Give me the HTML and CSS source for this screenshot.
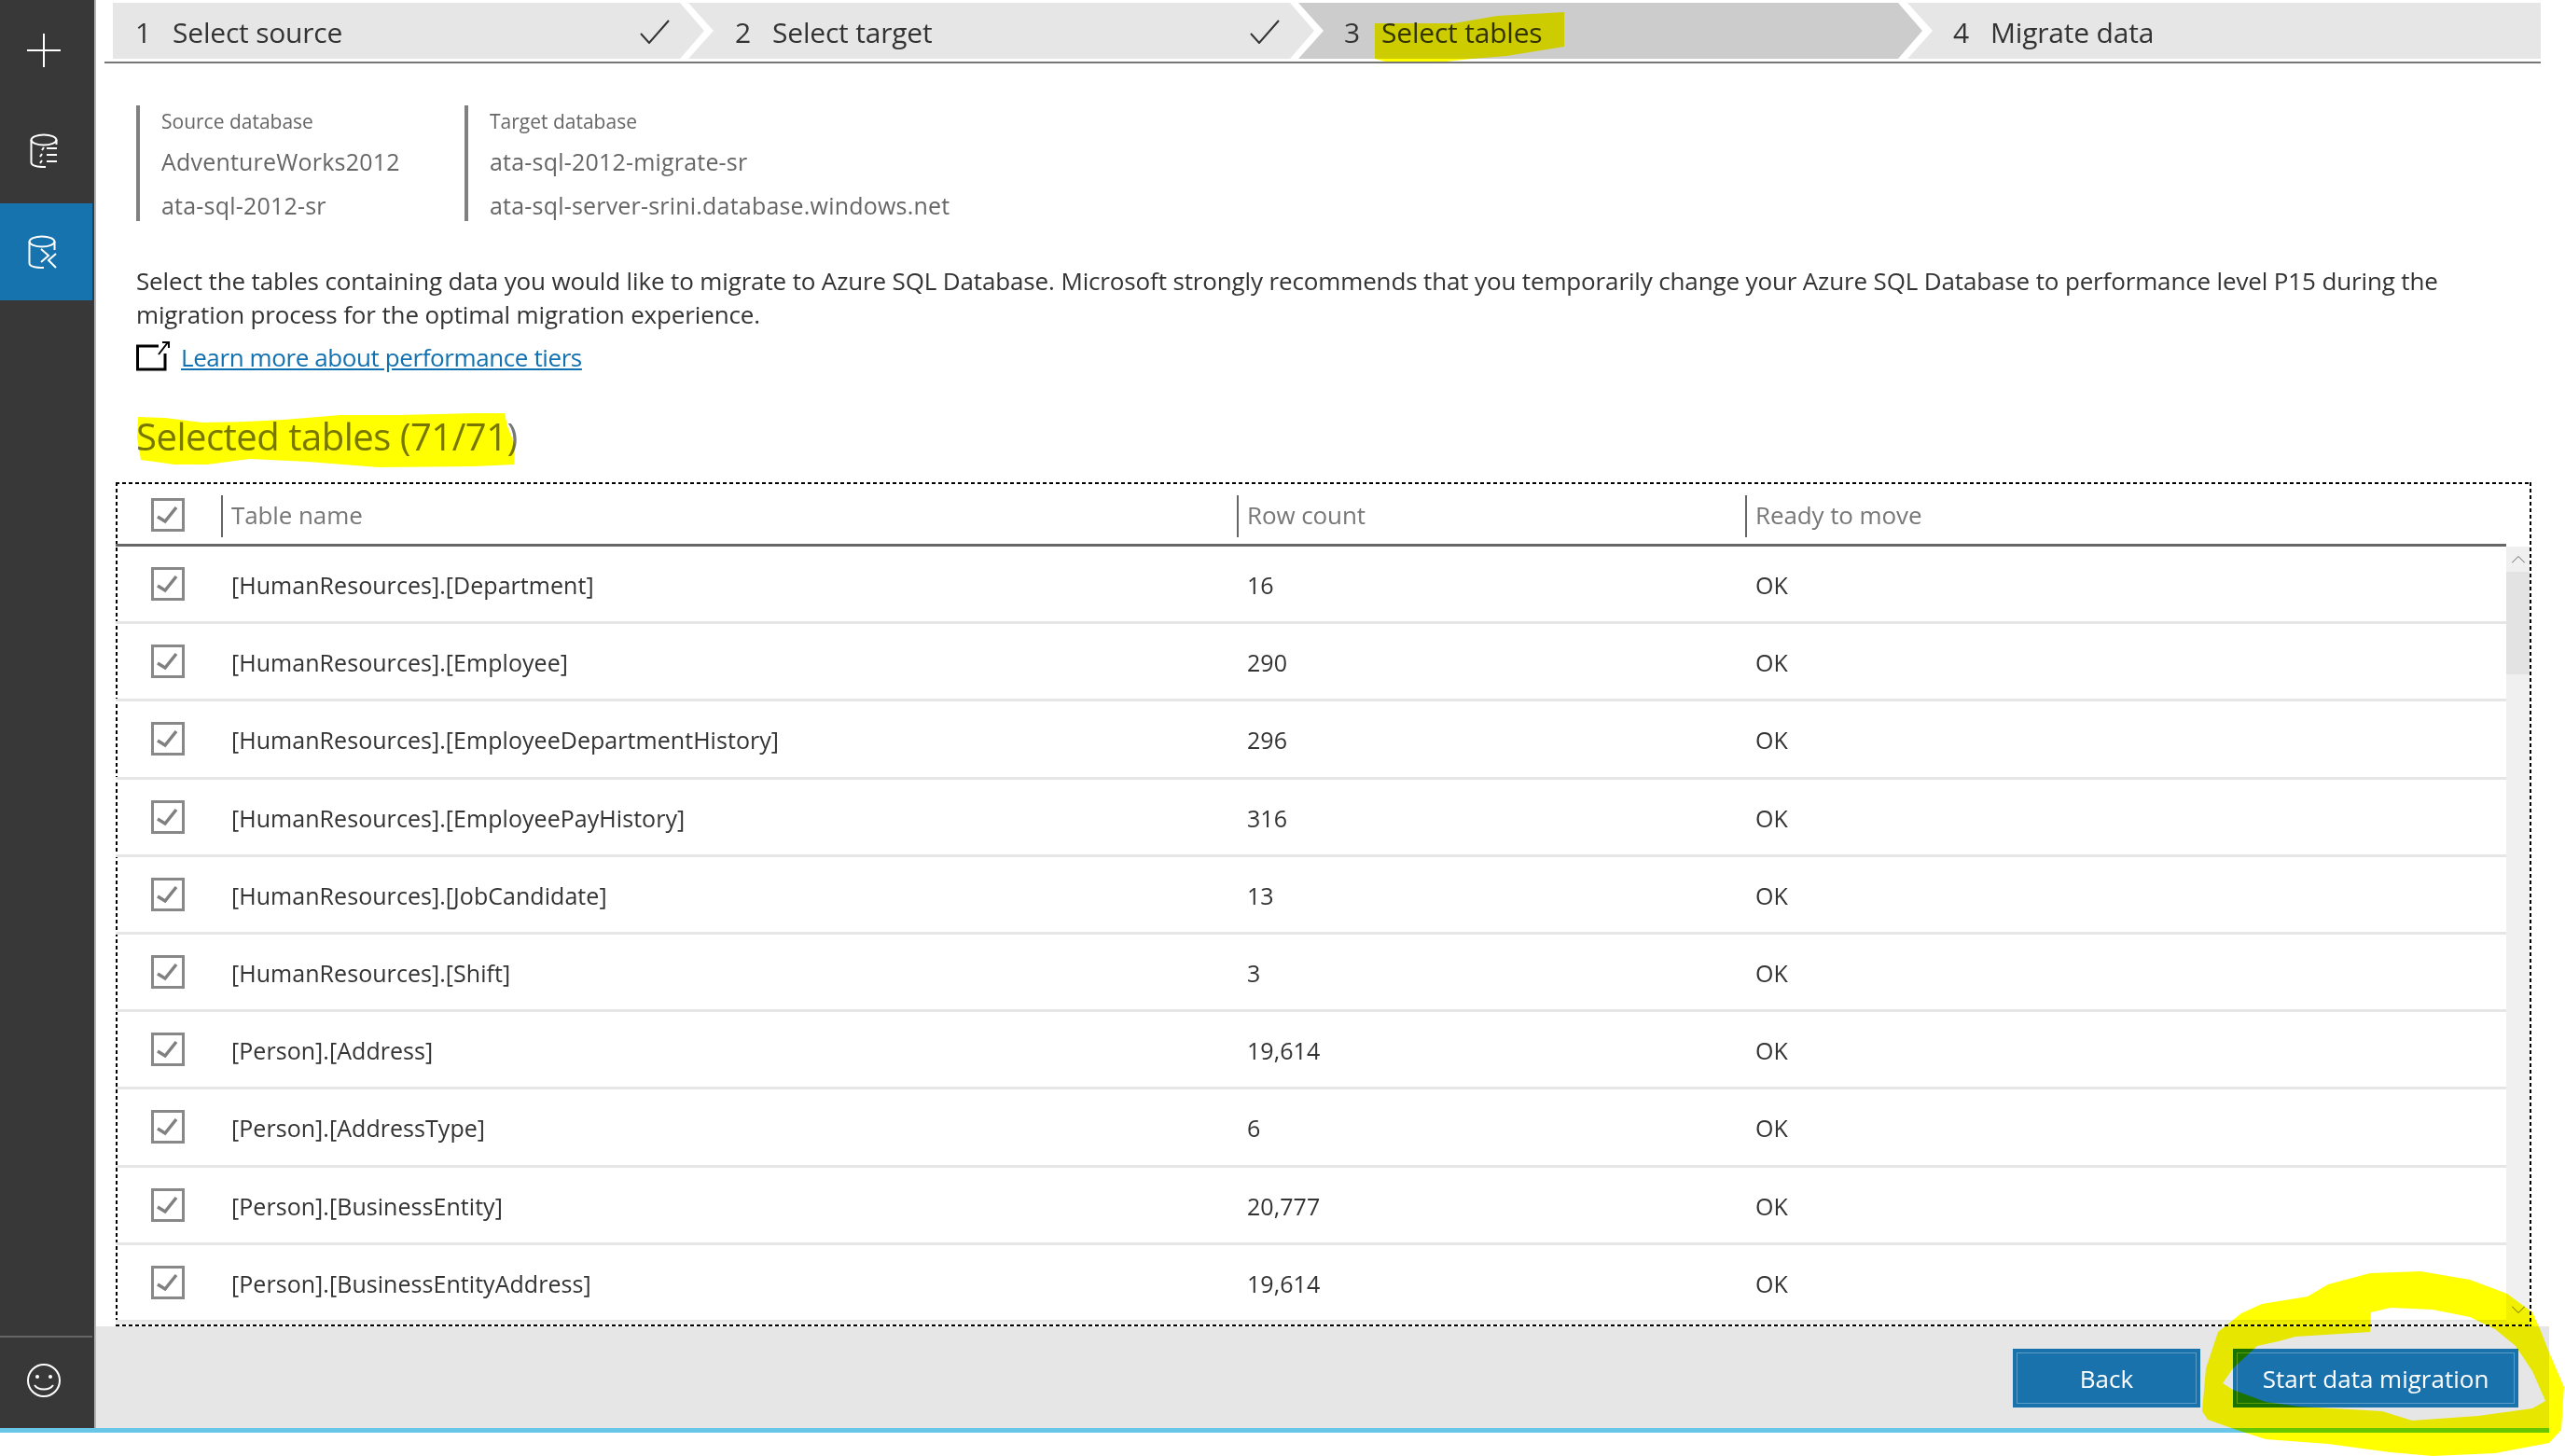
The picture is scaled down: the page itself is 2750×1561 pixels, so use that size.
FILE: index.html
```html
<!DOCTYPE html>
<html lang="en">
<head>
    <meta charset="UTF-8">
    <title>Select tables - Data Migration Assistant</title>
    <link rel="stylesheet" href="styles.css">
</head>
<body>
    <svg class="defs" width="0" height="0">
        <symbol id="check" viewBox="0 0 36 36">
            <rect x="1.5" y="1.5" width="33" height="33" fill="#fff" stroke="#888" stroke-width="3"/>
            <path d="M7 20 L15 25 L27 10" fill="none" stroke="#808080" stroke-width="3.5"/>
        </symbol>
    </svg>

    <div class="app">
        <nav class="sidebar">
            <div class="nav-item">
                <svg width="36" height="36" viewBox="0 0 36 36" fill="none" stroke="#fff" stroke-width="2"><path d="M0 18H36M18 0V36"/></svg>
            </div>
            <div class="nav-item">
                <svg width="30" height="38" viewBox="0 0 30 38" fill="none" stroke="#fff" stroke-width="2">
                    <ellipse cx="15" cy="7" rx="13.5" ry="5.5"/>
                    <path d="M1.5 7V31C1.5 34 6 36 17 36M28.5 7V12"/>
                    <path d="M15 15l-2 3M13 22l-2 3M13 29l-2 3M18 16H29M18 23H29M18 30H29"/>
                </svg>
            </div>
            <div class="nav-item active">
                <svg width="32" height="36" viewBox="0 0 32 36" fill="none" stroke="#fff" stroke-width="2">
                    <ellipse cx="15" cy="7" rx="13.5" ry="5.5"/>
                    <path d="M1.5 7V30C1.5 33 6 35 17 35M28.5 7V16"/>
                    <path d="M14 15L22 22L14 29M30 20L22 27L30 35"/>
                </svg>
            </div>
            <div class="nav-spacer"></div>
            <div class="nav-item smile">
                <svg width="36" height="36" viewBox="0 0 36 36" fill="none" stroke="#fff" stroke-width="2">
                    <circle cx="18" cy="18" r="17"/>
                    <circle cx="11" cy="14" r="2" fill="#fff" stroke="none"/>
                    <circle cx="25" cy="14" r="2" fill="#fff" stroke="none"/>
                    <path d="M8 23C12 29 24 29 28 23"/>
                </svg>
            </div>
        </nav>

        <main class="main">
            <div class="stepper">
                <div class="step step-first">
                    <span class="step-num">1</span><span>Select source</span>
                    <svg class="step-check" width="32" height="26" viewBox="0 0 32 26" fill="none" stroke="#333" stroke-width="2"><path d="M1 15L10 25L31 1"/></svg>
                </div>
                <div class="step step-second">
                    <span class="step-num">2</span><span>Select target</span>
                    <svg class="step-check" width="32" height="26" viewBox="0 0 32 26" fill="none" stroke="#333" stroke-width="2"><path d="M1 15L10 25L31 1"/></svg>
                </div>
                <div class="step step-third current">
                    <span class="step-num">3</span><span>Select tables</span>
                </div>
                <div class="step step-fourth">
                    <span class="step-num">4</span><span>Migrate data</span>
                </div>
            </div>

            <div class="db-info">
                <div class="db-block db-source">
                    <div class="db-label">Source database</div>
                    <div class="db-value">AdventureWorks2012</div>
                    <div class="db-value">ata-sql-2012-sr</div>
                </div>
                <div class="db-block">
                    <div class="db-label">Target database</div>
                    <div class="db-value">ata-sql-2012-migrate-sr</div>
                    <div class="db-value">ata-sql-server-srini.database.windows.net</div>
                </div>
            </div>

            <p class="intro">Select the tables containing data you would like to migrate to Azure SQL Database. Microsoft strongly recommends that you temporarily change your Azure SQL Database to performance level P15 during the migration process for the optimal migration experience.</p>

            <div class="learn-more">
                <svg width="37" height="33" viewBox="0 0 37 33" fill="none" stroke="#000" stroke-width="3">
                    <path d="M24 6H1.5V31H31V14"/>
                    <path d="M24 15L34 2M28 2H35V8" stroke-width="2"/>
                </svg>
                <a href="#">Learn more about performance tiers</a>
            </div>

            <h2 class="tables-title">Selected tables (71/71)</h2>

            <div class="table-box">
                <div class="table-head">
                    <div class="cell-check"><svg width="36" height="36"><use href="#check"/></svg></div>
                    <div class="head-cell">Table name</div>
                    <div class="head-cell">Row count</div>
                    <div class="head-cell">Ready to move</div>
                </div>
                <div class="table-body">
                    <div class="rows">
                        <div class="row"><div class="cell-check"><svg width="36" height="36"><use href="#check"/></svg></div><div class="cell">[HumanResources].[Department]</div><div class="cell">16</div><div class="cell">OK</div></div>
                        <div class="row"><div class="cell-check"><svg width="36" height="36"><use href="#check"/></svg></div><div class="cell">[HumanResources].[Employee]</div><div class="cell">290</div><div class="cell">OK</div></div>
                        <div class="row"><div class="cell-check"><svg width="36" height="36"><use href="#check"/></svg></div><div class="cell">[HumanResources].[EmployeeDepartmentHistory]</div><div class="cell">296</div><div class="cell">OK</div></div>
                        <div class="row"><div class="cell-check"><svg width="36" height="36"><use href="#check"/></svg></div><div class="cell">[HumanResources].[EmployeePayHistory]</div><div class="cell">316</div><div class="cell">OK</div></div>
                        <div class="row"><div class="cell-check"><svg width="36" height="36"><use href="#check"/></svg></div><div class="cell">[HumanResources].[JobCandidate]</div><div class="cell">13</div><div class="cell">OK</div></div>
                        <div class="row"><div class="cell-check"><svg width="36" height="36"><use href="#check"/></svg></div><div class="cell">[HumanResources].[Shift]</div><div class="cell">3</div><div class="cell">OK</div></div>
                        <div class="row"><div class="cell-check"><svg width="36" height="36"><use href="#check"/></svg></div><div class="cell">[Person].[Address]</div><div class="cell">19,614</div><div class="cell">OK</div></div>
                        <div class="row"><div class="cell-check"><svg width="36" height="36"><use href="#check"/></svg></div><div class="cell">[Person].[AddressType]</div><div class="cell">6</div><div class="cell">OK</div></div>
                        <div class="row"><div class="cell-check"><svg width="36" height="36"><use href="#check"/></svg></div><div class="cell">[Person].[BusinessEntity]</div><div class="cell">20,777</div><div class="cell">OK</div></div>
                        <div class="row"><div class="cell-check"><svg width="36" height="36"><use href="#check"/></svg></div><div class="cell">[Person].[BusinessEntityAddress]</div><div class="cell">19,614</div><div class="cell">OK</div></div>
                    </div>
                    <div class="scrollbar">
                        <div class="scroll-btn"><svg width="14" height="8" viewBox="0 0 14 8" fill="none" stroke="#666" stroke-width="1"><path d="M0 7.5L7 .5L14 7.5"/></svg></div>
                        <div class="scroll-thumb"></div>
                        <div class="scroll-track"></div>
                        <div class="scroll-btn"><svg width="14" height="8" viewBox="0 0 14 8" fill="none" stroke="#666" stroke-width="1"><path d="M0 .5L7 7.5L14 .5"/></svg></div>
                    </div>
                </div>
            </div>

            <div class="footer">
                <button class="btn btn-back">Back</button>
                <button class="btn btn-start">Start data migration</button>
            </div>
        </main>
    </div>

    <!-- yellow marker strokes drawn over the screenshot -->
    <svg class="marker" viewBox="0 0 2750 1561" width="2750" height="1561">
        <path fill="#ff0" d="M1474 25L1559 25L1605 17L1677 13L1677 50L1615 60L1578 63L1550 66L1485 66L1474 63Z"/>
        <path fill="#ff0" d="M148 447L177 448L217 453L263 452L304 450L365 445L427 445L508 443L541 443L544 457L552 477L551 498L508 500L406 501L330 495L268 492L222 498L187 498L151 493L147 470Z"/>
        <path fill="#ff0" fill-rule="evenodd" d="M2361 1513L2365 1467L2378 1428L2403 1408L2425 1398L2474 1390L2496 1377L2541 1365L2595 1363L2648 1372L2688 1387L2715 1407L2724 1427L2733 1450L2749 1487L2746 1533L2733 1547L2675 1558L2608 1561L2563 1557L2496 1548L2429 1543L2398 1533L2367 1522Z M2383 1483L2394 1490L2429 1503L2465 1508L2554 1513L2586 1523L2657 1518L2715 1510L2729 1502L2715 1470L2697 1443L2675 1425L2648 1412L2608 1404L2563 1402L2542 1407L2541 1428L2461 1433L2443 1438L2420 1443L2394 1467Z"/>
    </svg>
</body>
</html>
```

FILE: styles.css
```css
html, body {
    margin: 0;
    height: 1561px;
    overflow: hidden;
    background: white;
    font-family: "Open Sans", sans-serif;
    color: #333;
}
.defs {
    display: block;
    height: 0;
}
.app {
    display: flex;
    width: 2733px;
    height: 1531px;
    border-bottom: 5px solid #68c6e8;
}

/* left rail */
.sidebar {
    width: 99px;
    padding-right: 2px;
    border-right: 2px solid #b4b4b4;
    background: #383838;
    display: flex;
    flex-direction: column;
}
.nav-item {
    height: 108px;
    padding-right: 5px;
    display: flex;
    align-items: center;
    justify-content: center;
    flex-shrink: 0;
    box-sizing: border-box;
}
.nav-item.active {
    background: #1673ad;
    height: 104px;
    margin-top: 2px;
    padding-right: 8px;
}
.nav-spacer {
    flex: 1;
}
.nav-item.smile {
    height: 99px;
    padding-bottom: 6px;
    border-top: 2px solid #666;
}

.main {
    flex: 1;
    min-width: 0;
    display: flex;
    flex-direction: column;
}

/* wizard steps */
.stepper {
    display: flex;
    margin: 0 9px;
    padding: 3px 0 3px 9px;
    border-bottom: 2px solid #767676;
}
.step {
    height: 60px;
    background: #e6e6e6;
    display: flex;
    align-items: center;
    font-size: 30px;
    letter-spacing: -0.2px;
    position: relative;
    margin-left: -17px;
    padding-top: 2px;
    padding-left: 48px;
    box-sizing: border-box;
    clip-path: polygon(0 0, calc(100% - 26px) 0, 100% 50%, calc(100% - 26px) 100%, 0 100%, 27px 50%);
}
.step-first {
    width: 634px;
    margin-left: 0;
    padding-left: 24px;
    clip-path: polygon(0 0, calc(100% - 26px) 0, 100% 50%, calc(100% - 26px) 100%, 0 100%);
}
.step-second {
    width: 671px;
    padding-left: 50px;
}
.step-third {
    width: 669px;
    padding-left: 49px;
}
.step-fourth {
    width: 679px;
    margin-left: -16px;
    padding-left: 49px;
    clip-path: polygon(0 0, 100% 0, 100% 100%, 0 100%, 27px 50%);
}
.step.current {
    background: #ccc;
}
.step-num {
    width: 40px;
}
.step-check {
    margin-left: auto;
    margin-right: 37px;
}

/* database summary */
.db-info {
    display: flex;
    margin: 45px 0 0 43px;
}
.db-block {
    height: 124px;
    padding-left: 23px;
    border-left: 4px solid #808080;
    color: #666;
    font-size: 25px;
    letter-spacing: 0.2px;
}
.db-source {
    width: 325px;
}
.db-label {
    font-size: 21px;
    letter-spacing: 0;
    line-height: 34px;
    margin-bottom: 3px;
}
.db-value {
    line-height: 47px;
}

.intro {
    margin: 46px 100px 0 43px;
    font-size: 26px;
    line-height: 36px;
    letter-spacing: -0.14px;
}
.learn-more {
    display: flex;
    align-items: center;
    gap: 11px;
    margin: 10px 0 0 43px;
    height: 33px;
    font-size: 26px;
    letter-spacing: -0.4px;
}
.learn-more a {
    color: #1070b0;
    padding-top: 2px;
}
.tables-title {
    margin: 42px 0 0 43px;
    font-size: 40px;
    font-weight: normal;
    line-height: 56px;
    color: #777;
    letter-spacing: -0.5px;
}

/* table */
.table-box {
    margin: 21px 19px 0 21px;
    height: 905px;
    box-sizing: border-box;
    padding: 0 2px 2px 0;
    display: flex;
    flex-direction: column;
    background:
        linear-gradient(90deg, #000 4px, transparent 4px) 0 0 / 7px 2px repeat-x,
        linear-gradient(90deg, #000 4px, transparent 4px) 0 100% / 7px 2px repeat-x,
        linear-gradient(#000 4px, transparent 4px) 0 0 / 2px 7px repeat-y,
        linear-gradient(#000 4px, transparent 4px) 100% 0 / 2px 7px repeat-y;
}
.table-head, .row {
    display: grid;
    grid-template-columns: 113px 1089px 545px 1fr;
    align-items: center;
}
.table-head {
    height: 66px;
    margin-right: 25px;
    border-bottom: 3px solid #666;
    flex-shrink: 0;
    font-size: 26px;
    letter-spacing: -0.1px;
    color: #777;
}
.cell-check {
    padding-left: 38px;
    display: flex;
}
.table-head .cell-check {
    margin-top: 3px;
}
.head-cell {
    height: 45px;
    line-height: 43px;
    margin-top: 7px;
    border-left: 2px solid #666;
    padding-left: 9px;
}
.table-body {
    flex: 1;
    min-height: 0;
    display: flex;
    border-bottom: 3px solid #ececec;
}
.rows {
    flex: 1;
    min-width: 0;
    overflow: hidden;
}
.row {
    height: 83.2px;
    box-sizing: border-box;
    border-bottom: 3px solid #e6e6e6;
    font-size: 25px;
    letter-spacing: 0.05px;
}
.cell {
    padding: 2px 0 0 11px;
}

/* scrollbar */
.scrollbar {
    width: 25px;
    display: flex;
    flex-direction: column;
    background: #f0f0f0;
}
.scroll-btn {
    height: 27px;
    flex-shrink: 0;
    display: flex;
    align-items: center;
    justify-content: center;
}
.scroll-thumb {
    height: 110px;
    background: #e3e3e3;
}
.scroll-track {
    flex: 1;
}

/* bottom actions */
.footer {
    flex: 1;
    background: #e6e6e6;
    display: flex;
    justify-content: flex-end;
    align-items: flex-start;
    gap: 35px;
    padding: 24px 33px 0 0;
}
.btn {
    height: 63px;
    background: #1a72ad;
    border: none;
    color: white;
    font-family: "Open Sans", sans-serif;
    font-size: 26px;
    outline: 1px solid #5b9cc6;
    outline-offset: -5px;
}
.btn-back {
    width: 201px;
}
.btn-start {
    width: 306px;
}

.marker {
    position: absolute;
    top: 0;
    left: 0;
    pointer-events: none;
    mix-blend-mode: multiply;
}
```
